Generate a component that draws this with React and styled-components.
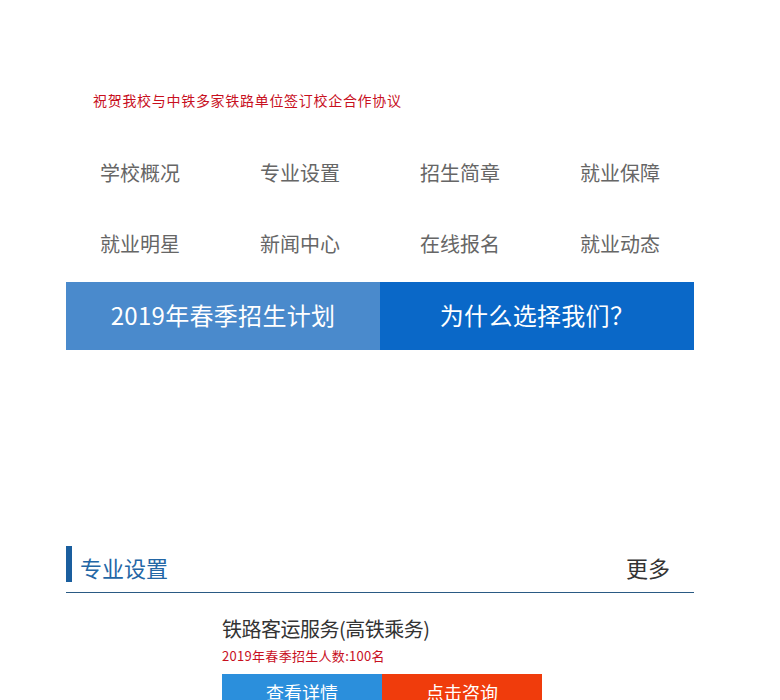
import styled, { createGlobalStyle } from 'styled-components';

const GlobalStyle = createGlobalStyle`
	body {
		margin: 0;
		background: #fff;
		font-family: "Noto Sans CJK SC", "Noto Sans", sans-serif;
	}
`;

const navItems = ['学校概况', '专业设置', '招生简章', '就业保障', '就业明星', '新闻中心', '在线报名', '就业动态'];

const App = () => {
	return (
		<Page>
			<GlobalStyle />
			<Notice>祝贺我校与中铁多家铁路单位签订校企合作协议</Notice>
			<Nav>
				{navItems.map((item) => (
					<NavLink key={item} href="/">{item}</NavLink>
				))}
			</Nav>
			<Banner>
				<BannerItem $dark={false}>2019年春季招生计划</BannerItem>
				<BannerItem $dark={true}>为什么选择我们？</BannerItem>
			</Banner>
			<SectionHead>
				<SectionTitle>专业设置</SectionTitle>
				<More href="/">更多</More>
			</SectionHead>
			<Course>
				<Thumb />
				<CourseInfo>
					<CourseName>铁路客运服务(高铁乘务)</CourseName>
					<CourseNote>2019年春季招生人数:100名</CourseNote>
					<Actions>
						<ActionBtn type="button" $tone="blue">查看详情</ActionBtn>
						<ActionBtn type="button" $tone="red">点击咨询</ActionBtn>
					</Actions>
				</CourseInfo>
			</Course>
		</Page>
	);
};

const Page = styled.div`
	width: 628px;
	margin-left: 66px;
	padding-top: 90px;
	height: 700px;
	overflow: hidden;
	box-sizing: border-box;
`;

const Notice = styled.div`
	padding-left: 27px;
	font-size: 14px;
	line-height: 20px;
	color: #c8101e;
	letter-spacing: 0.7px;
`;

const Nav = styled.nav`
	display: grid;
	grid-template-columns: repeat(4, 160px);
	grid-auto-rows: 71px;
	margin: 27px -6px 0;
`;

const NavLink = styled.a`
	display: flex;
	align-items: center;
	justify-content: center;
	font-size: 20px;
	color: #666;
	text-decoration: none;
`;

const Banner = styled.div`
	display: grid;
	grid-template-columns: 1fr 1fr;
	height: 68px;
	margin-top: 3px;
`;

const BannerItem = styled.div`
	display: flex;
	align-items: center;
	justify-content: center;
	padding-bottom: 4px;
	background: ${(p) => (p.$dark ? '#0a68c8' : '#4a8acc')};
	color: #fff;
	font-size: 24px;
	letter-spacing: 0.3px;
`;

const SectionHead = styled.div`
	display: flex;
	align-items: center;
	justify-content: space-between;
	height: 36px;
	margin-top: 196px;
	padding-bottom: 10px;
	border-bottom: 1px solid #2a5a84;
`;

const SectionTitle = styled.h2`
	margin: 0;
	height: 36px;
	box-sizing: border-box;
	padding: 7px 0 0 8px;
	border-left: 6px solid #1a5e9e;
	font-size: 22px;
	font-weight: normal;
	line-height: 29px;
	color: #2366a5;
`;

const More = styled.a`
	margin-right: 24px;
	padding-top: 6px;
	font-size: 22px;
	line-height: 30px;
	color: #333;
	text-decoration: none;
`;

const Course = styled.div`
	display: flex;
	padding-top: 22px;
`;

const Thumb = styled.div`
	width: 140px;
	margin-right: 16px;
`;

const CourseInfo = styled.div`
	display: flex;
	flex-direction: column;
`;

const CourseName = styled.h3`
	margin: 0;
	font-size: 20px;
	font-weight: normal;
	line-height: 28px;
	color: #333;
	letter-spacing: -0.5px;
`;

const CourseNote = styled.p`
	margin: 3px 0 0;
	font-size: 13px;
	line-height: 20px;
	color: #c8101e;
	letter-spacing: 0.3px;
`;

const Actions = styled.div`
	display: flex;
	margin-top: 8px;
`;

const ActionBtn = styled.button`
	width: 160px;
	height: 36px;
	border: none;
	padding: 0;
	font-family: inherit;
	font-size: 18px;
	color: #fff;
	background: ${(p) => (p.$tone === 'blue' ? '#2b8fdc' : '#f03c0c')};
	cursor: pointer;
`;

export default App;
